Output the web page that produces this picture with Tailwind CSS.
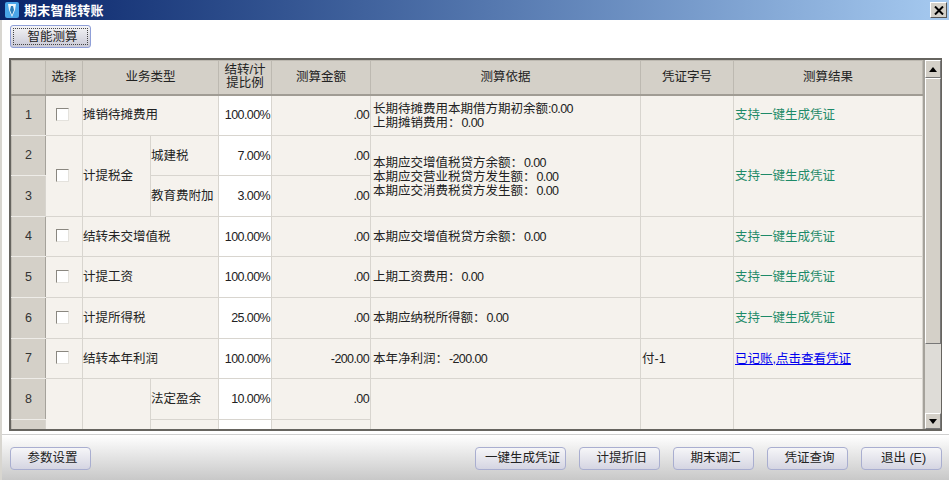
<!DOCTYPE html>
<html lang="zh-CN">
<head>
  <meta charset="UTF-8" />
  <title>期末智能转账</title>
  <script src="https://cdn.jsdelivr.net/npm/@tailwindcss/browser@4"></script>
</head>
<body class="bg-white overflow-hidden text-[#222] text-[12.5px] font-['Liberation_Sans','Noto_Sans_CJK_SC',sans-serif]">
  <div class="w-[949px] h-[480px] flex flex-col border-l-2 border-[#d8d6d0]">

    <!-- title bar -->
    <div class="h-[20px] -ml-[2px] pl-[5px] pr-[2px] flex items-center bg-gradient-to-r from-[#0a246a] to-[#a6caf0] shrink-0">
      <svg class="w-[14px] h-[16px] shrink-0" viewBox="0 0 14 16">
        <rect x="0" y="0" width="14" height="16" rx="2" fill="#4aa5e8"/>
        <path d="M3 2h8l-1 6-3 7-3-7z" fill="#eef7fc"/>
        <path d="M6 4h2l1 4-2 5-2-5z" fill="#2a7db8"/>
      </svg>
      <span class="ml-[5px] text-white font-bold text-[13px] tracking-[0.3px] leading-none">期末智能转账</span>
      <button class="ml-auto w-[17px] h-[16px] bg-[#d4d0c8] border border-t-white border-l-white border-r-[#555] border-b-[#555] flex items-center justify-center">
        <svg class="w-[10px] h-[9px]" viewBox="0 0 10 9"><path d="M1 0.5l8 8M9 0.5l-8 8" stroke="#000" stroke-width="2" fill="none"/></svg>
      </button>
    </div>

    <!-- top toolbar -->
    <div class="h-[38px] pt-[5px] pl-[8px] shrink-0">
      <button class="w-[81px] h-[23px] rounded-[3px] border border-[#8f9fd8] bg-gradient-to-b from-[#f4f4f6] to-[#c9c9d6] p-[2px]">
        <span class="block h-full leading-[16px] pl-[4px] border border-dotted border-[#444] text-center">智能测算</span>
      </button>
    </div>

    <!-- grid -->
    <div class="ml-[7px] w-[933px] h-[373px] shrink-0 flex border border-[#66645f] border-t-2 border-l-2 border-b-2 overflow-hidden">
      <div class="w-[914px] h-full overflow-hidden shrink-0 border-r-2 border-[#a5a29b]">
        <table class="w-[912px] table-fixed border-collapse bg-[#f5f2ed] [word-spacing:-2px] [&_td]:pt-[1px] [&_td]:border-[1.5px] [&_td]:border-[#d8d5cf] [&_th]:border-[1.5px] [&_th]:border-[#bdb9b1] [&_th]:font-normal [&_th]:bg-[#d4d0c8] [&_tbody_th]:border-y-[#eeece8] [&_tbody_th]:border-r-[#a5a29b] [&_tbody_th]:text-[#333]">
          <colgroup>
            <col class="w-[34px]" />
            <col class="w-[37px]" />
            <col class="w-[68px]" />
            <col class="w-[68px]" />
            <col class="w-[53px]" />
            <col class="w-[99px]" />
            <col class="w-[270px]" />
            <col class="w-[93px]" />
            <col />
          </colgroup>
          <thead>
            <tr class="h-[34px] border-b-2 border-[#a09c94]">
              <th></th>
              <th>选择</th>
              <th colspan="2">业务类型</th>
              <th class="leading-[13px]">结转/计<br />提比例</th>
              <th>测算金额</th>
              <th>测算依据</th>
              <th>凭证字号</th>
              <th>测算结果</th>
            </tr>
          </thead>
          <tbody>
            <tr class="h-[41px]">
              <th>1</th>
              <td class="pl-[10px]"><input type="checkbox" class="block appearance-none -mt-[3px] w-[13px] h-[13px] bg-white border border-[#8a8780] border-r-[#e4e2dd] border-b-[#e4e2dd]" /></td>
              <td colspan="2">摊销待摊费用</td>
              <td class="bg-white text-right pr-[1px] tracking-[-0.6px]">100.00%</td>
              <td class="text-right pr-[1px] tracking-[-0.6px]">.00</td>
              <td class="pl-[2px] leading-[14px]">长期待摊费用本期借方期初余额<span class="tracking-[-0.6px]">:0.00</span><br />上期摊销费用：<span class="tracking-[-0.6px]"> 0.00</span></td>
              <td></td>
              <td class="pl-[1px] text-[#1d8a68]">支持一键生成凭证</td>
            </tr>
            <tr class="h-[40px]">
              <th>2</th>
              <td rowspan="2" class="pl-[10px]"><input type="checkbox" class="block appearance-none -mt-[3px] w-[13px] h-[13px] bg-white border border-[#8a8780] border-r-[#e4e2dd] border-b-[#e4e2dd]" /></td>
              <td rowspan="2">计提税金</td>
              <td>城建税</td>
              <td class="bg-white text-right pr-[1px] tracking-[-0.6px]">7.00%</td>
              <td class="text-right pr-[1px] tracking-[-0.6px]">.00</td>
              <td rowspan="2" class="pl-[2px] leading-[14px]">本期应交增值税贷方余额：<span class="tracking-[-0.6px]"> 0.00</span><br />本期应交营业税贷方发生额：<span class="tracking-[-0.6px]"> 0.00</span><br />本期应交消费税贷方发生额：<span class="tracking-[-0.6px]"> 0.00</span></td>
              <td rowspan="2"></td>
              <td rowspan="2" class="pl-[1px] text-[#1d8a68]">支持一键生成凭证</td>
            </tr>
            <tr class="h-[41px]">
              <th>3</th>
              <td>教育费附加</td>
              <td class="bg-white text-right pr-[1px] tracking-[-0.6px]">3.00%</td>
              <td class="text-right pr-[1px] tracking-[-0.6px]">.00</td>
            </tr>
            <tr class="h-[40px]">
              <th>4</th>
              <td class="pl-[10px]"><input type="checkbox" class="block appearance-none -mt-[3px] w-[13px] h-[13px] bg-white border border-[#8a8780] border-r-[#e4e2dd] border-b-[#e4e2dd]" /></td>
              <td colspan="2">结转未交增值税</td>
              <td class="bg-white text-right pr-[1px] tracking-[-0.6px]">100.00%</td>
              <td class="text-right pr-[1px] tracking-[-0.6px]">.00</td>
              <td class="pl-[2px]">本期应交增值税贷方余额：<span class="tracking-[-0.6px]"> 0.00</span></td>
              <td></td>
              <td class="pl-[1px] text-[#1d8a68]">支持一键生成凭证</td>
            </tr>
            <tr class="h-[41px]">
              <th>5</th>
              <td class="pl-[10px]"><input type="checkbox" class="block appearance-none -mt-[3px] w-[13px] h-[13px] bg-white border border-[#8a8780] border-r-[#e4e2dd] border-b-[#e4e2dd]" /></td>
              <td colspan="2">计提工资</td>
              <td class="bg-white text-right pr-[1px] tracking-[-0.6px]">100.00%</td>
              <td class="text-right pr-[1px] tracking-[-0.6px]">.00</td>
              <td class="pl-[2px]">上期工资费用：<span class="tracking-[-0.6px]"> 0.00</span></td>
              <td></td>
              <td class="pl-[1px] text-[#1d8a68]">支持一键生成凭证</td>
            </tr>
            <tr class="h-[41px]">
              <th>6</th>
              <td class="pl-[10px]"><input type="checkbox" class="block appearance-none -mt-[3px] w-[13px] h-[13px] bg-white border border-[#8a8780] border-r-[#e4e2dd] border-b-[#e4e2dd]" /></td>
              <td colspan="2">计提所得税</td>
              <td class="bg-white text-right pr-[1px] tracking-[-0.6px]">25.00%</td>
              <td class="text-right pr-[1px] tracking-[-0.6px]">.00</td>
              <td class="pl-[2px]">本期应纳税所得额：<span class="tracking-[-0.6px]"> 0.00</span></td>
              <td></td>
              <td class="pl-[1px] text-[#1d8a68]">支持一键生成凭证</td>
            </tr>
            <tr class="h-[40px]">
              <th>7</th>
              <td class="pl-[10px]"><input type="checkbox" class="block appearance-none -mt-[3px] w-[13px] h-[13px] bg-white border border-[#8a8780] border-r-[#e4e2dd] border-b-[#e4e2dd]" /></td>
              <td colspan="2">结转本年利润</td>
              <td class="bg-white text-right pr-[1px] tracking-[-0.6px]">100.00%</td>
              <td class="text-right pr-[1px] tracking-[-0.6px]">-200.00</td>
              <td class="pl-[2px]">本年净利润：<span class="tracking-[-0.6px]"> -200.00</span></td>
              <td class="pl-[1px]">付-1</td>
              <td class="pl-[1px] text-[#0000ee] underline">已记账,点击查看凭证</td>
            </tr>
            <tr class="h-[41px]">
              <th>8</th>
              <td rowspan="2"></td>
              <td rowspan="2"></td>
              <td>法定盈余</td>
              <td class="bg-white text-right pr-[1px] tracking-[-0.6px]">10.00%</td>
              <td class="text-right pr-[1px] tracking-[-0.6px]">.00</td>
              <td rowspan="2"></td>
              <td rowspan="2"></td>
              <td rowspan="2"></td>
            </tr>
            <tr class="h-[40px]">
              <th></th>
              <td></td>
              <td class="bg-white"></td>
              <td></td>
            </tr>
          </tbody>
        </table>
      </div>

      <!-- scrollbar -->
      <div class="w-[16px] shrink-0 flex flex-col bg-[#dedcd7]">
        <div class="h-[18px] bg-[#d4d0c8] border border-t-white border-l-white border-r-[#777] border-b-[#777] flex items-center justify-center">
          <svg class="w-[8px] h-[5px]" viewBox="0 0 8 5"><path d="M4 0l4 5H0z" fill="#000"/></svg>
        </div>
        <div class="h-[266px] bg-[#d4d0c8] border border-t-white border-l-white border-r-[#777] border-b-[#777]"></div>
        <div class="flex-1"></div>
        <div class="h-[16px] bg-[#d4d0c8] border border-t-white border-l-white border-r-[#777] border-b-[#777] flex items-center justify-center">
          <svg class="w-[8px] h-[5px]" viewBox="0 0 8 5"><path d="M4 5l4-5H0z" fill="#000"/></svg>
        </div>
      </div>
    </div>

    <!-- bottom toolbar -->
    <div class="mt-[3px] flex-1 border-t border-[#cfcfcf] bg-gradient-to-b from-white to-[#c8c8c8] pt-[12px] pl-[8px] flex">
      <button class="w-[81px] h-[23px] pl-[4px] rounded-[4px] border border-[#a9aed0] bg-gradient-to-b from-[#f6f6f8] to-[#d5d5e2]">参数设置</button>
      <div class="ml-auto pr-[7px] flex gap-[13px]">
        <button class="w-[91px] h-[23px] pl-[4px] rounded-[4px] border border-[#a9aed0] bg-gradient-to-b from-[#f6f6f8] to-[#d5d5e2]">一键生成凭证</button>
        <button class="w-[81px] h-[23px] pl-[4px] rounded-[4px] border border-[#a9aed0] bg-gradient-to-b from-[#f6f6f8] to-[#d5d5e2]">计提折旧</button>
        <button class="w-[81px] h-[23px] pl-[4px] rounded-[4px] border border-[#a9aed0] bg-gradient-to-b from-[#f6f6f8] to-[#d5d5e2]">期末调汇</button>
        <button class="w-[81px] h-[23px] pl-[4px] rounded-[4px] border border-[#a9aed0] bg-gradient-to-b from-[#f6f6f8] to-[#d5d5e2]">凭证查询</button>
        <button class="w-[81px] h-[23px] pl-[4px] rounded-[4px] border border-[#a9aed0] bg-gradient-to-b from-[#f6f6f8] to-[#d5d5e2]">退出 (E)</button>
      </div>
    </div>
  </div>
</body>
</html>
